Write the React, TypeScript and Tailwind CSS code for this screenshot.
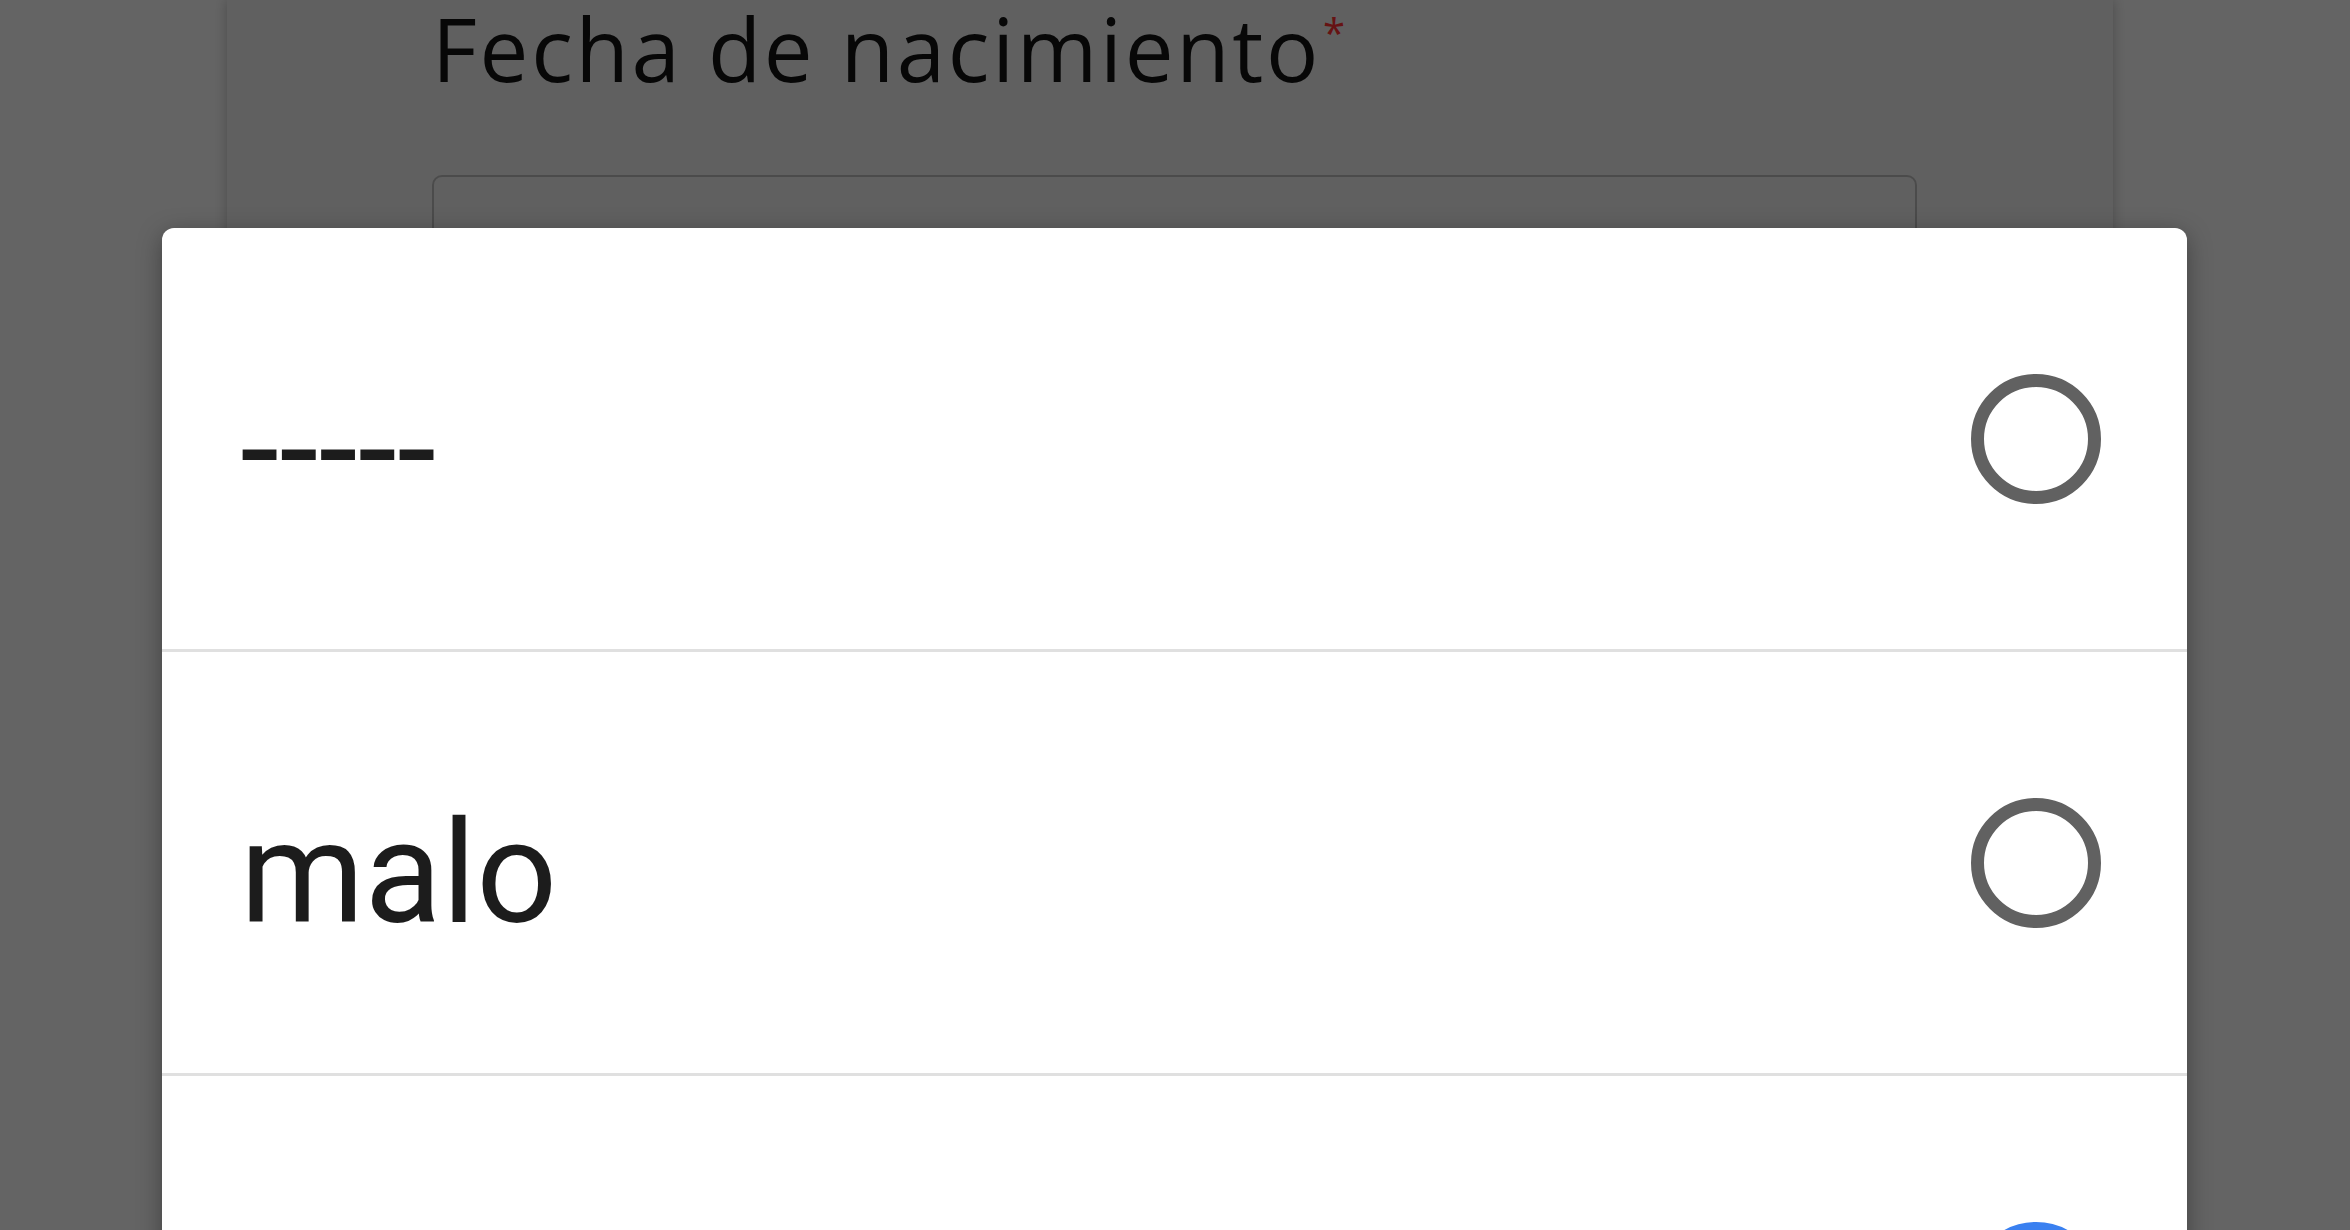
const options = [
  { label: "-----", selected: false },
  { label: "malo", selected: false },
  { label: "bueno", selected: true },
];

function Radio({ selected }: { selected: boolean }) {
  if (selected) {
    return (
      <div className="flex h-[130px] w-[130px] shrink-0 items-center justify-center rounded-full border-[13px] border-[#3a80f0]">
        <div className="h-[64px] w-[64px] rounded-full bg-[#3a80f0]" />
      </div>
    );
  }
  return (
    <div className="h-[130px] w-[130px] shrink-0 rounded-full border-[13px] border-[#616161]" />
  );
}

export default function App() {
  return (
    <div className="relative h-[1230px] w-[2350px] overflow-hidden bg-[#fafafa]">
      {/* form behind the dialog */}
      <div className="ml-[227px] h-full w-[1886px] bg-[#f0f0f0] pl-[205px] pt-[5px] shadow-[0_0_12px_rgba(0,0,0,0.25)]">
        <label className="flex items-start font-['Open_Sans',sans-serif] text-[87px] leading-none tracking-[2.7px] text-[#121212]">
          <span>Fecha de nacimiento</span>
          <span className="ml-[2px] mt-[8px] text-[40px] leading-none text-[#ff3030]">*</span>
        </label>
        <div className="mt-[83px] h-[300px] w-[1485px] rounded-[10px] border-2 border-[#bcbcbc] bg-[#f0f0f0]" />
      </div>

      {/* dim overlay */}
      <div className="absolute inset-0 bg-black/60" />

      {/* single choice dialog */}
      <div className="absolute left-[162px] top-[228px] w-[2025px] overflow-hidden rounded-[12px] bg-white font-['Roboto',sans-serif] shadow-[0_6px_24px_rgba(0,0,0,0.35)]">
        {options.map((o) => (
          <div
            key={o.label}
            className="flex h-[424px] items-center justify-between border-b-[3px] border-[#e0e0e0] pl-[78px] pr-[86px]"
          >
            <span className="pt-[22px] text-[142px] leading-none text-[#1c1c1c]">
              {o.label}
            </span>
            <Radio selected={o.selected} />
          </div>
        ))}
      </div>
    </div>
  );
}
